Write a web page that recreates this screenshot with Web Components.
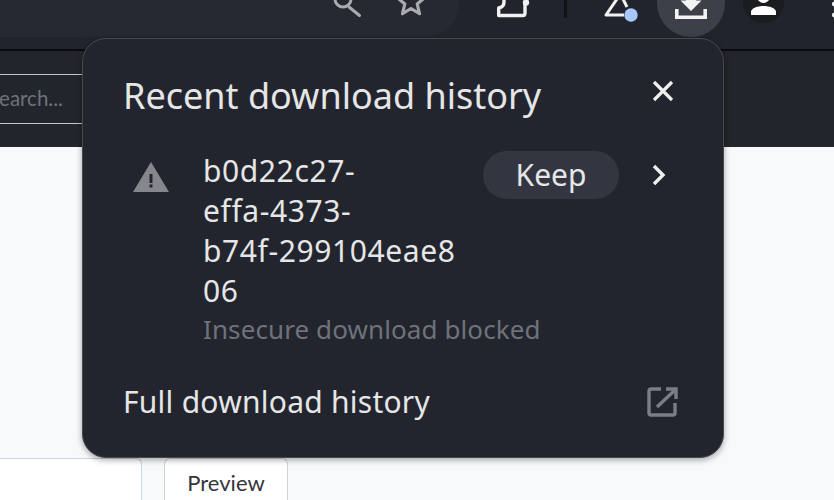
<!DOCTYPE html>
<html>
<head>
<meta charset="utf-8">
<title>Recent download history</title>
<style>
    html, body { margin: 0; height: 500px; overflow: hidden; background: #f8f9fb; }
    body { font-family: "Noto Sans", sans-serif; position: relative; }
</style>
</head>
<body>
<browser-toolbar></browser-toolbar>
<search-strip></search-strip>
<page-tabs></page-tabs>
<download-bubble>
    <span slot="title">Recent download history</span>
    <download-row status="Insecure download blocked">b0d22c27-<br>effa-4373-<br>b74f-299104eae8<br>06</download-row>
    <span slot="footer">Full download history</span>
</download-bubble>

<script>
const browserToolbarTemplate = document.createElement('template');
browserToolbarTemplate.innerHTML = `
    <style>
        :host {
            display: block;
            height: 49px;
            overflow: hidden;
            background-color: #22242d;
            border-bottom: 2px solid #0b0b0d;
        }
        .row {
            display: flex;
            align-items: flex-start;
            height: 68px;
            margin-top: -31px;
        }
        .omnibox {
            width: 459px;
            height: 68px;
            flex: none;
            display: flex;
            background-color: #262832;
            border-radius: 0 34px 34px 0;
            box-sizing: border-box;
            padding-left: 332px;
        }
        svg { display: block; flex: none; overflow: visible; }
        .download {
            width: 68px;
            height: 68px;
            flex: none;
            margin-left: 19px;
            background-color: #3d4048;
            border-radius: 50%;
        }
        .avatar {
            width: 41px;
            height: 54px;
            flex: none;
            margin-left: 18px;
            background-color: #1b1c1f;
            border-radius: 21px;
        }
    </style>
    <div class="row">
        <div class="omnibox">
            <svg width="32" height="68" viewBox="0 0 32 68" fill="none" stroke="#a9abaf" stroke-width="3">
                <circle cx="11" cy="30" r="8"/>
                <path d="M17 38 L27.5 46.5" stroke-linecap="round"/>
            </svg>
            <svg width="30" height="68" viewBox="0 0 30 68" fill="none" stroke="#a9abaf" stroke-width="3.2" style="margin-left:32px">
                <path d="M15 18.5 L18.8 27.7 L28.8 28.5 L21.2 35 L23.5 44.7 L15 39.5 L6.5 44.7 L8.8 35 L1.2 28.5 L11.2 27.7 Z" stroke-linejoin="round"/>
            </svg>
        </div>
        <svg width="36" height="68" viewBox="0 0 36 68" fill="none" style="margin-left:37px">
            <path d="M8 28 V33 Q8 38 2.7 39 V46.5 H27 Q29 46.5 29 44 V35" stroke="#f1f1f1" stroke-width="3.4" stroke-linejoin="round"/>
            <circle cx="30" cy="33.5" r="3.2" fill="#f1f1f1"/>
        </svg>
        <svg width="3" height="49" viewBox="0 0 3 49" style="margin-left:32px"><rect width="3" height="49" rx="1.5" fill="#101114"/></svg>
        <svg width="34" height="68" viewBox="0 0 34 68" fill="none" style="margin-left:37px">
            <path d="M13 30 L2 46 H20 M18 28 L23 38" stroke="#f1f1f1" stroke-width="3" stroke-linejoin="round"/>
            <circle cx="27" cy="46" r="6.7" fill="#a8c7fa"/>
        </svg>
        <div class="download">
            <svg width="68" height="68" viewBox="0 0 68 68">
                <path d="M19.8 40 V48.2 H48.2 V40" fill="none" stroke="#f3f3f3" stroke-width="3.6"/>
                <path d="M29 22 H39 V31.5 H44.5 L34 42 L23.5 31.5 H29 Z" fill="#f3f3f3"/>
            </svg>
        </div>
        <div class="avatar">
            <svg width="41" height="54" viewBox="0 0 41 54">
                <circle cx="20.5" cy="27.5" r="6.5" fill="#fff"/>
                <path d="M8 46 V43 C8 39 15 37 20.5 37 C26 37 33 39 33 43 V46 Z" fill="#fff"/>
            </svg>
        </div>
        <svg width="6" height="68" viewBox="0 0 6 68" style="margin-left:47px">
            <circle cx="3.5" cy="35" r="2.6" fill="#f1f1f1"/>
            <circle cx="3.5" cy="46" r="2.6" fill="#f1f1f1"/>
        </svg>
    </div>
`;

class BrowserToolbar extends HTMLElement {
    constructor(){
        super();

        this.attachShadow( { mode:"open" } );
        this.shadowRoot.appendChild( browserToolbarTemplate.content.cloneNode( true ) );
    }

}

const searchStripTemplate = document.createElement('template');
searchStripTemplate.innerHTML = `
    <style>
        :host {
            display: block;
            height: 96px;
            box-sizing: border-box;
            padding-top: 23px;
            background-color: #23252c;
            overflow: hidden;
        }
        .input {
            width: 200px;
            height: 50px;
            box-sizing: border-box;
            padding-bottom: 2px;
            border-top: 1px solid #c6c7ca;
            border-bottom: 1px solid #c6c7ca;
            display: flex;
            align-items: center;
        }
        span {
            margin-left: -12px;
            font-family: Lato, sans-serif;
            font-size: 20.5px;
            color: #6e727a;
        }
    </style>
    <div class="input"><span>Search...</span></div>
`;

class SearchStrip extends HTMLElement {
    constructor(){
        super();

        this.attachShadow( { mode:"open" } );
        this.shadowRoot.appendChild( searchStripTemplate.content.cloneNode( true ) );
    }

}

const pageTabsTemplate = document.createElement('template');
pageTabsTemplate.innerHTML = `
    <style>
        :host {
            display: flex;
            gap: 22px;
            margin-top: 311px;
            height: 60px;
        }
        .tab {
            box-sizing: border-box;
            height: 60px;
            background-color: #ffffff;
            border: 1px solid #ced4da;
            border-bottom: none;
            border-radius: 0 6px 0 0;
            font-family: Lato, sans-serif;
            font-size: 22px;
            color: #33363b;
            display: flex;
            justify-content: center;
            padding-top: 10px;
        }
        .editor { width: 142px; border-left: none; }
        .preview { width: 124px; border-radius: 6px 6px 0 0; }
    </style>
    <div class="tab editor"></div>
    <div class="tab preview">Preview</div>
`;

class PageTabs extends HTMLElement {
    constructor(){
        super();

        this.attachShadow( { mode:"open" } );
        this.shadowRoot.appendChild( pageTabsTemplate.content.cloneNode( true ) );
    }

}

const downloadBubbleTemplate = document.createElement('template');
downloadBubbleTemplate.innerHTML = `
    <style>
        :host {
            position: absolute;
            left: 82px;
            top: 38px;
            width: 642px;
            height: 420px;
            box-sizing: border-box;
            display: flex;
            flex-direction: column;
            padding: 0 40px;
            background-color: #22252e;
            border: 1px solid #47494d;
            border-radius: 24px;
            box-shadow: 0 2px 6px rgba( 0, 0, 0, .35 );
            color: #e6e6e7;
        }
        header {
            display: flex;
            justify-content: space-between;
            align-items: center;
            box-sizing: border-box;
            height: 113px;
            padding-top: 1px;
            font-size: 36px;
        }
        header svg { margin-right: 8px; margin-top: -9px; }
        footer {
            display: flex;
            justify-content: space-between;
            align-items: center;
            margin-top: auto;
            height: 112px;
            font-size: 30px;
            letter-spacing: .25px;
        }
        footer svg { margin-right: 4px; }
        svg { display: block; flex: none; }
    </style>
    <header>
        <slot name="title"></slot>
        <svg width="24" height="24" viewBox="0 0 24 24" fill="none" stroke="#f0f0f0" stroke-width="3.2"><path d="M3 3 L21 21 M21 3 L3 21"/></svg>
    </header>
    <slot></slot>
    <footer>
        <slot name="footer"></slot>
        <svg width="32" height="32" viewBox="0 0 32 32" fill="none" stroke="#7b7e85" stroke-width="3.4"><path d="M14 3 H4 Q2 3 2 5 V27 Q2 29 4 29 H26 Q28 29 28 27 V17"/><path d="M10 21 L28 4"/><path d="M19 3 H29 V13"/></svg>
    </footer>
`;

class DownloadBubble extends HTMLElement {
    constructor(){
        super();

        this.attachShadow( { mode:"open" } );
        this.shadowRoot.appendChild( downloadBubbleTemplate.content.cloneNode( true ) );
    }

}

const downloadRowTemplate = document.createElement('template');
downloadRowTemplate.innerHTML = `
    <style>
        :host {
            display: grid;
            grid-template-columns: 80px 257px auto auto;
            justify-content: start;
            align-items: start;
        }
        svg { display: block; }
        .warn { margin: 11px 0 0 10px; }
        .name {
            font-size: 30px;
            line-height: 40px;
            letter-spacing: .6px;
        }
        .status {
            font-size: 26px;
            line-height: 36px;
            letter-spacing: .1px;
            color: #6f727a;
            white-space: nowrap;
        }
        .keep {
            margin-left: 23px;
            width: 136px;
            height: 48px;
            border-radius: 24px;
            background-color: #333641;
            font-size: 30px;
            display: flex;
            align-items: center;
            justify-content: center;
        }
        .more { margin: 13px 0 0 32px; }
    </style>
    <svg class="warn" width="36" height="30" viewBox="0 0 36 30">
        <path d="M18 0 L36 30 H0 Z" fill="#85878c"/>
        <rect x="16.5" y="12" width="3" height="9" fill="#22252e"/>
        <rect x="16.5" y="22.5" width="3" height="3" fill="#22252e"/>
    </svg>
    <div>
        <div class="name"><slot></slot></div>
        <div class="status"></div>
    </div>
    <div class="keep">Keep</div>
    <svg class="more" width="16" height="22" viewBox="0 0 16 22" fill="none" stroke="#f0f0f0" stroke-width="3.4"><path d="M3 2 L12 11 L3 20"/></svg>
`;

class DownloadRow extends HTMLElement {
    constructor(){
        super();

        this.attachShadow( { mode:"open" } );
        this.shadowRoot.appendChild( downloadRowTemplate.content.cloneNode( true ) );
        this.shadowRoot.querySelector( '.status' ).textContent = this.getAttribute( 'status' );
    }

}

window.customElements.define( 'browser-toolbar', BrowserToolbar );
window.customElements.define( 'search-strip', SearchStrip );
window.customElements.define( 'page-tabs', PageTabs );
window.customElements.define( 'download-bubble', DownloadBubble );
window.customElements.define( 'download-row', DownloadRow );
</script>
</body>
</html>
